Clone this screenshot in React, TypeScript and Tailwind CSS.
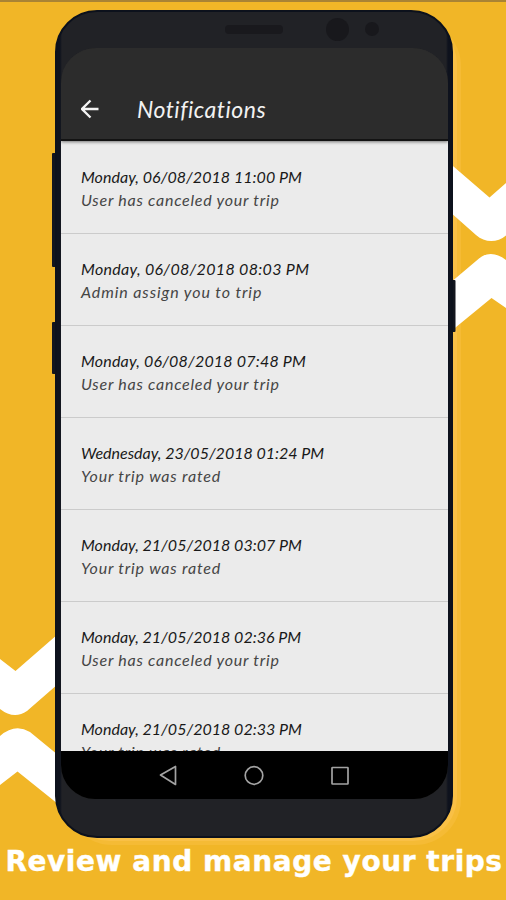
type Notification = {
  date: string;
  text: string;
  dateClass: string;
  textClass: string;
};

const notifications: Notification[] = [
  { date: "Monday, 06/08/2018 11:00 PM", text: "User has canceled your trip", dateClass: "tracking-[0.05px]", textClass: "tracking-[0.75px]" },
  { date: "Monday, 06/08/2018 08:03 PM", text: "Admin assign you to trip", dateClass: "tracking-[0.32px]", textClass: "tracking-[0.9px]" },
  { date: "Monday, 06/08/2018 07:48 PM", text: "User has canceled your trip", dateClass: "tracking-[0.2px]", textClass: "tracking-[0.75px]" },
  { date: "Wednesday, 23/05/2018 01:24 PM", text: "Your trip was rated", dateClass: "tracking-[0px]", textClass: "tracking-[0.8px]" },
  { date: "Monday, 21/05/2018 03:07 PM", text: "Your trip was rated", dateClass: "tracking-[0.02px]", textClass: "tracking-[0.8px]" },
  { date: "Monday, 21/05/2018 02:36 PM", text: "User has canceled your trip", dateClass: "tracking-[0.02px]", textClass: "tracking-[0.75px]" },
  { date: "Monday, 21/05/2018 02:33 PM", text: "Your trip was rated", dateClass: "tracking-[0.02px]", textClass: "tracking-[0.8px]" },
];

// Yellow backdrop art: phone glow, white chevrons and the side buttons
function Backdrop() {
  return (
    <svg className="absolute inset-0" width="506" height="900" viewBox="0 0 506 900">
      <rect width="506" height="2" fill="#a98334" />
      <rect x="66" y="20" width="395" height="825" rx="46" fill="#f5bb35" />
      <rect x="66" y="20" width="391" height="821" rx="44" fill="#f9c046" />
      <g fill="#fff">
        <path d="M450 163.500L489.500 197.500L506 183V235.500C497 243 485 243 476 235L450 212Z" />
        <path d="M450 283L479 258.500Q491 249 506 260V308L491.500 298L450 332Z" />
        <path d="M0 659L15.500 671L58 634V684L27 711Q14 720 0 709Z" />
        <path d="M0 736Q15 723 30 732L58 755V804L17.500 771.500L0 785Z" />
      </g>
      <g fill="#12151e">
        <rect x="52" y="153" width="6" height="114" rx="1" />
        <rect x="52" y="322" width="6" height="52" rx="1" />
        <rect x="450" y="280" width="5.500" height="52" rx="1" />
      </g>
    </svg>
  );
}

function Sensors() {
  return (
    <div className="h-[36px] shrink-0 flex items-center pb-[2px] pl-[164px]">
      <span className="w-[58px] h-[9px] rounded-sm bg-[#19191d]" />
      <span className="ml-[43px] size-[23px] rounded-full bg-[#18181c]" />
      <span className="ml-[16px] size-[14px] rounded-full bg-[#18181c]" />
    </div>
  );
}

function AppBar() {
  return (
    <header className="relative z-10 h-[93px] shrink-0 flex items-end bg-[#2c2c2c] border-b-2 border-[#131313] pb-[15px] pl-[20px] shadow-[0_1px_3px_rgba(0,0,0,0.5)]">
      <svg width="20" height="24" viewBox="0 0 20 24" fill="none" stroke="#f4f4f4" strokeWidth="2.300" className="mb-[3px]">
        <path d="M17.500 12H1.500M9.500 3.500L1 12L9.500 20.500" />
      </svg>
      <h1 className="ml-[36px] text-[23px] leading-[29px] italic text-[#f2f2f2] tracking-[0.5px]">Notifications</h1>
    </header>
  );
}

function Row({ item }: { item: Notification }) {
  return (
    <li className="h-[92px] shrink-0 border-b border-[#cbcbcb] pt-[23px] pl-[20px] italic text-[16px] leading-[23px] whitespace-nowrap">
      <p className={`text-[#191919] ${item.dateClass}`}>{item.date}</p>
      <p className={`text-[#454545] ${item.textClass}`}>{item.text}</p>
    </li>
  );
}

function NavBar() {
  return (
    <nav className="h-[48px] shrink-0 flex items-center gap-[62px] bg-black pl-[95px]">
      <svg width="24" height="24" viewBox="0 0 24 24" fill="none" stroke="#a3a3a3" strokeWidth="1.700">
        <path d="M4.500 12L19.500 3.500V21.500Z" strokeLinejoin="round" />
      </svg>
      <svg width="24" height="24" viewBox="0 0 24 24" fill="none" stroke="#a3a3a3" strokeWidth="1.700">
        <circle cx="12" cy="12.500" r="8.800" />
      </svg>
      <svg width="24" height="24" viewBox="0 0 24 24" fill="none" stroke="#a3a3a3" strokeWidth="1.700">
        <rect x="4" y="4.500" width="16" height="16.500" rx="0.500" />
      </svg>
    </nav>
  );
}

export default function App() {
  return (
    <div className="relative w-[506px] h-[900px] overflow-hidden bg-[#f1b627] font-['Lato',sans-serif]">
      <Backdrop />
      <main className="relative flex flex-col items-center pt-[10px]">
        <div className="w-[398px] h-[828px] ml-[2px] px-[4px] rounded-[42px] bg-[linear-gradient(to_right,#0e121d_3px,#212226_5px,#212226_389px,#0e121d_391px)] border-2 border-[#0c111c] flex flex-col">
          <Sensors />
          <div className="w-[387px] h-[751px] rounded-t-[35px] rounded-b-[34px] overflow-hidden flex flex-col bg-[#2c2c2c]">
            <AppBar />
            <ul className="h-[610px] shrink-0 flex flex-col overflow-hidden pt-px bg-[#ebebeb]">
              {notifications.map((item) => (
                <Row key={item.date} item={item} />
              ))}
            </ul>
            <NavBar />
          </div>
        </div>
        <h2 className="mt-[5px] ml-[2px] font-['DejaVu_Sans',sans-serif] font-bold text-[28px] leading-[38px] tracking-[0.55px] text-white whitespace-nowrap [-webkit-text-stroke:0.4px_white]">
          Review and manage your trips
        </h2>
      </main>
    </div>
  );
}
